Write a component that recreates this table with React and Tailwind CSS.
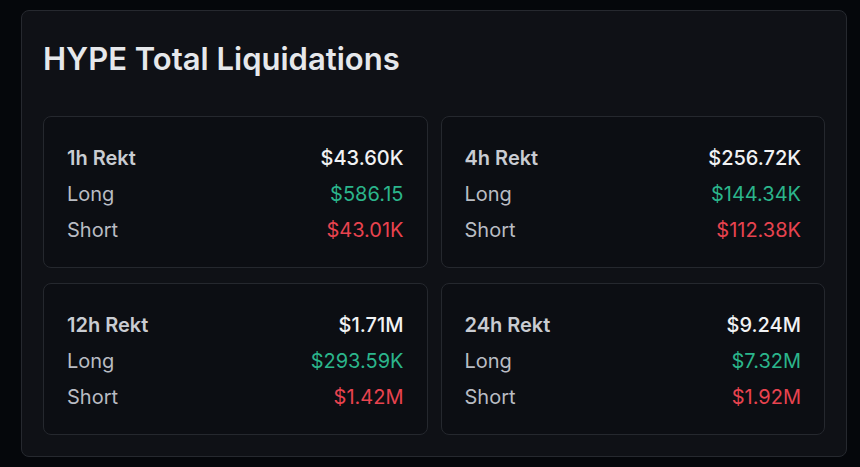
const periods = [
  { label: "1h Rekt", total: "$43.60K", long: "$586.15", short: "$43.01K" },
  { label: "4h Rekt", total: "$256.72K", long: "$144.34K", short: "$112.38K" },
  { label: "12h Rekt", total: "$1.71M", long: "$293.59K", short: "$1.42M" },
  { label: "24h Rekt", total: "$9.24M", long: "$7.32M", short: "$1.92M" },
];

function PeriodBox({ period }) {
  return (
    <div className="rounded-lg border border-[#25282e] bg-[#0c0e13] px-[23px] pt-[23px] pb-[19px] text-[20px] leading-[36px]">
      <div className="flex items-center justify-between">
        <span className="font-semibold text-[#c9ccd2]">{period.label}</span>
        <span className="font-medium text-[#f1f2f4]">{period.total}</span>
      </div>
      <div className="flex items-center justify-between">
        <span className="text-[#b9bcc3]">Long</span>
        <span className="text-[#2bb58b]">{period.long}</span>
      </div>
      <div className="flex items-center justify-between">
        <span className="text-[#b9bcc3]">Short</span>
        <span className="text-[#e8434f]">{period.short}</span>
      </div>
    </div>
  );
}

export default function App() {
  return (
    <div
      className="min-h-[467px] w-[860px] bg-[#05070b] pl-[21px] pr-[13px] pt-[10px] pb-[10px]"
      style={{ fontFamily: "Inter, 'Noto Sans', sans-serif" }}
    >
      <div className="rounded-lg border border-[#26292f] bg-[#0f1116] px-[21px] pt-[22px] pb-[21px]">
        <h1 className="text-[31px] font-semibold leading-[52px] text-[#e6e8eb]">
          HYPE Total Liquidations
        </h1>
        <div className="mt-[31px] grid grid-cols-2 gap-x-[13px] gap-y-[15px]">
          {periods.map((p) => (
            <PeriodBox key={p.label} period={p} />
          ))}
        </div>
      </div>
    </div>
  );
}
